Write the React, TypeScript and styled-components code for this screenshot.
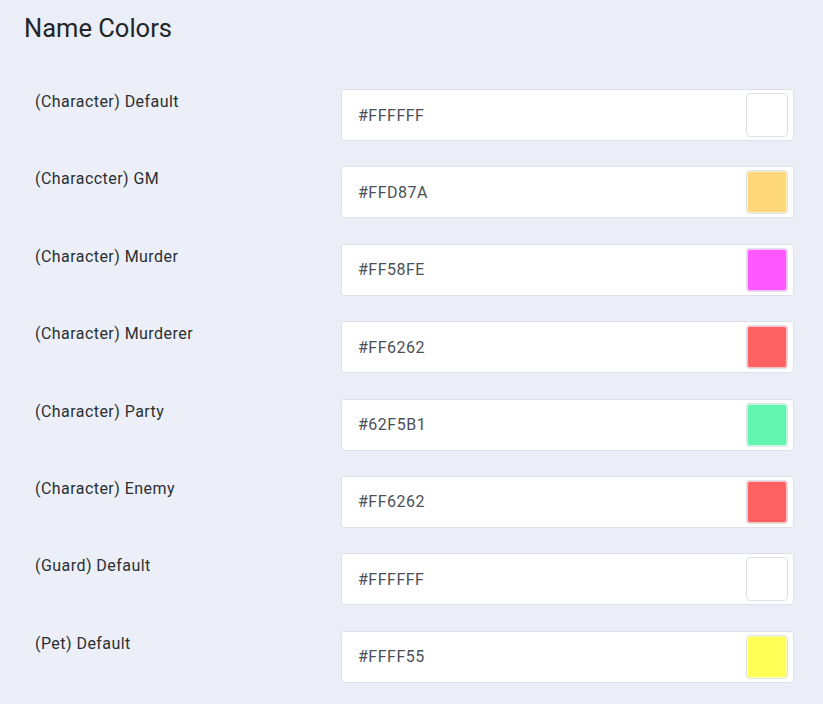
import React from "react";
import styled, { createGlobalStyle } from "styled-components";

const GlobalStyle = createGlobalStyle`
  html, body {
    margin: 0;
    padding: 0;
    background: #ebeef6;
  }
  body {
    font-family: Roboto, "Liberation Sans", Arial, sans-serif;
  }
`;

interface NameColor {
  label: string;
  value: string;
}

const colors: NameColor[] = [
  { label: "(Character) Default", value: "#FFFFFF" },
  { label: "(Characcter) GM", value: "#FFD87A" },
  { label: "(Character) Murder", value: "#FF58FE" },
  { label: "(Character) Murderer", value: "#FF6262" },
  { label: "(Character) Party", value: "#62F5B1" },
  { label: "(Character) Enemy", value: "#FF6262" },
  { label: "(Guard) Default", value: "#FFFFFF" },
  { label: "(Pet) Default", value: "#FFFF55" },
];

const App: React.FC = () => {
  return (
    <Page>
      <GlobalStyle />
      <Title>Name Colors</Title>
      <Form>
        {colors.map((c, i) => (
          <Row key={i}>
            <Label>{c.label}</Label>
            <InputBox>
              <HexText>{c.value}</HexText>
              <Swatch color={c.value} />
            </InputBox>
          </Row>
        ))}
      </Form>
    </Page>
  );
};

const Page = styled.div`
  width: 823px;
  height: 704px;
  overflow: hidden;
  background: #ebeef6;
`;

const Title = styled.h2`
  margin: 13px 0 0 24px;
  font-size: 25.5px;
  line-height: 31px;
  font-weight: 400;
  color: #212529;
`;

const Form = styled.div`
  display: flex;
  flex-direction: column;
  gap: 25.4px;
  padding: 45px 0 0 22px;
`;

const Row = styled.div`
  display: grid;
  grid-template-columns: 306px 453px;
  column-gap: 13px;
  height: 52px;
`;

const Label = styled.div`
  padding: 1px 0 0 13px;
  font-size: 16px;
  line-height: 24px;
  letter-spacing: 0.45px;
  color: #2b2f33;
  background: #eceff7;
  margin-bottom: -25.4px;
`;

const InputBox = styled.div`
  display: flex;
  align-items: center;
  justify-content: space-between;
  box-sizing: border-box;
  height: 52px;
  padding: 0 5px 0 16px;
  background: #ffffff;
  border: 1px solid #dde2ea;
  border-radius: 3px;
`;

const HexText = styled.span`
  font-size: 16px;
  letter-spacing: 0.5px;
  color: #4a5058;
`;

const Swatch = styled.div<{ color: string }>`
  box-sizing: border-box;
  width: 42px;
  height: 44px;
  border: 1px solid #dde2ea;
  border-radius: 4px;
  background: ${(p) => p.color};
  box-shadow: inset 0 0 0 1px rgba(255, 255, 255, 0.6);
`;

export default App;
